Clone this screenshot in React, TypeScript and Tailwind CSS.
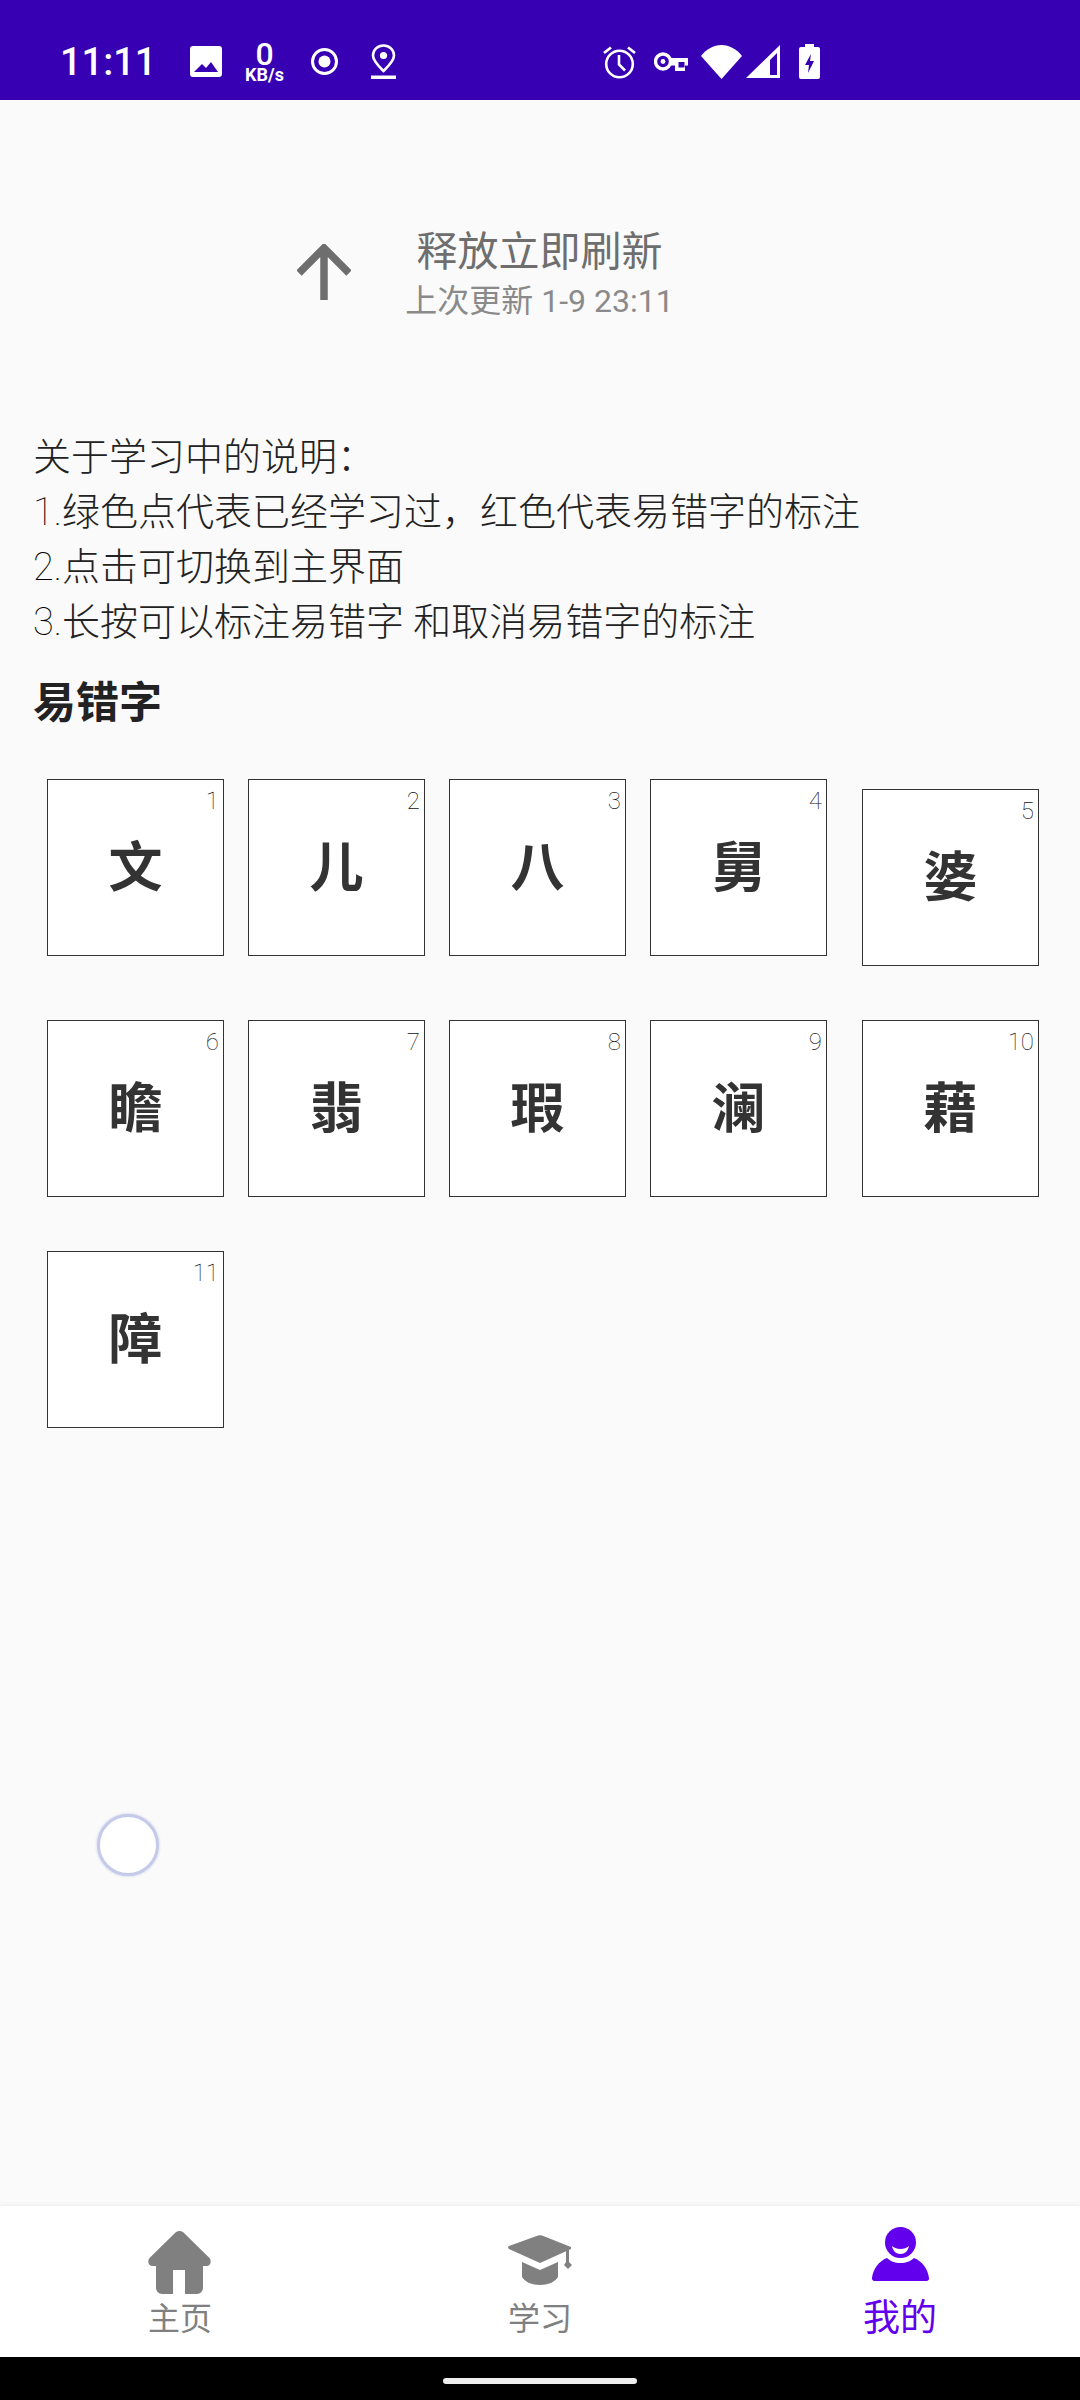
const FONT = 'font-["Roboto","Noto_Sans_CJK_SC",sans-serif]';

const ROWS = [
  [
    { n: 1, ch: '文' },
    { n: 2, ch: '儿' },
    { n: 3, ch: '八' },
    { n: 4, ch: '舅' },
    { n: 5, ch: '婆' },
  ],
  [
    { n: 6, ch: '瞻' },
    { n: 7, ch: '翡' },
    { n: 8, ch: '瑕' },
    { n: 9, ch: '澜' },
    { n: 10, ch: '藉' },
  ],
  [{ n: 11, ch: '障' }],
];

function StatusBar() {
  return (
    <div className="flex h-[100px] items-center bg-[#3700B3] pl-[60px] pt-[23px] text-white">
      <span className="w-[96px] whitespace-nowrap text-[38px] font-medium leading-none">11:11</span>
      {/* picture */}
      <svg className="ml-[34px]" width="32" height="31" viewBox="0 0 32 31">
        <path
          fillRule="evenodd"
          fill="#fff"
          d="M3 0h26a3 3 0 0 1 3 3v25a3 3 0 0 1-3 3H3a3 3 0 0 1-3-3V3a3 3 0 0 1 3-3zM4 26h24l-7-10-5 6-4-4z"
        />
      </svg>
      {/* net speed */}
      <div className="ml-[20px] flex w-[45px] flex-col items-center">
        <span className="text-[32px] font-medium leading-[26px]">0</span>
        <span className="text-[18px] font-bold leading-[15px]">KB/s</span>
      </div>
      <svg className="ml-[24px]" width="27" height="27" viewBox="0 0 27 27">
        <circle cx="13.5" cy="13.5" r="12" fill="none" stroke="#fff" strokeWidth="3" />
        <circle cx="13.5" cy="13.5" r="6" fill="#fff" />
      </svg>
      <svg className="ml-[33px]" width="25" height="35" viewBox="0 0 25 35">
        <path
          d="M12.5 27C8 22.5 2 17 2 11.5a10.5 10 0 0 1 21 0C23 17 17 22.5 12.5 27z"
          fill="none"
          stroke="#fff"
          strokeWidth="2.6"
        />
        <circle cx="12.5" cy="11.5" r="3.6" fill="#fff" />
        <rect x="0" y="31.5" width="25" height="3.5" fill="#fff" />
      </svg>
      {/* alarm */}
      <svg className="ml-[207px]" width="33" height="34" viewBox="0 0 33 34">
        <circle cx="16.5" cy="19" r="13.3" fill="none" stroke="#fff" strokeWidth="2.6" />
        <path d="M16 10v9.5l6 6" fill="none" stroke="#fff" strokeWidth="2.6" />
        <path d="M1 8l7-5.5M32 8l-7-5.5" fill="none" stroke="#fff" strokeWidth="2.8" />
      </svg>
      {/* key */}
      <svg className="ml-[18px]" width="34" height="19" viewBox="0 0 34 19">
        <circle cx="9" cy="9.5" r="7.5" fill="none" stroke="#fff" strokeWidth="3.4" />
        <circle cx="9" cy="9.5" r="2.4" fill="#fff" />
        <path d="M16 6h18v7.500h-3v5.500h-10v-5.500h-5z" fill="#fff" />
        <path d="M24.500 10h6v5.500h-6z" fill="#3700B3" />
      </svg>
      {/* wifi */}
      <svg className="ml-[13px]" width="41" height="34" viewBox="0 0 41 34">
        <path d="M0 11C5.5 4 12.5 0 20.5 0S35.500 4 41 11L20.500 34z" fill="#fff" />
      </svg>
      {/* signal */}
      <svg className="ml-[4px]" width="34" height="33" viewBox="0 0 34 33">
        <path fillRule="evenodd" fill="#fff" d="M34 0v33H0zM31 8l-7 7v15h7z" />
      </svg>
      {/* battery */}
      <svg className="ml-[19px]" width="21" height="35" viewBox="0 0 21 35">
        <path
          fillRule="evenodd"
          fill="#fff"
          d="M6 0h9v3h4a2 2 0 0 1 2 2v28a2 2 0 0 1-2 2H2a2 2 0 0 1-2-2V5a2 2 0 0 1 2-2h4zM12 10l-6 11h4l-1 8 6-12h-4z"
        />
      </svg>
    </div>
  );
}

function RefreshHeader() {
  return (
    <div className="flex h-[301px] items-center pl-[297px] pt-[48px]">
      <svg className="mt-[-6px]" width="54" height="56" viewBox="0 0 54 56">
        <path d="M27 56V4M2 29L27 4l25 25" fill="none" stroke="#6e6e6e" strokeWidth="7.500" />
      </svg>
      <div className="ml-[56px] flex w-[265px] flex-col items-center whitespace-nowrap">
        <span className="text-[41px] leading-[50px] text-[#6e6e6e]">释放立即刷新</span>
        <span className="mt-[2px] text-[32px] leading-[44px] text-[#8a8a8a]">上次更新 1-9 23:11</span>
      </div>
    </div>
  );
}

function CharBox({ n, ch, shifted }: { n: number; ch: string; shifted?: boolean }) {
  return (
    <div
      className={`relative flex h-[177px] w-[177px] shrink-0 items-center justify-center border-[1.5px] border-[#333] bg-white ${
        shifted ? 'mt-[10px]' : ''
      }`}
    >
      <span className="absolute right-[4px] top-[7px] text-[24px] font-thin leading-[28px] text-[#111]">{n}</span>
      <span className="mt-[2px] text-[54px] font-bold leading-none text-[#333]">{ch}</span>
    </div>
  );
}

function NavItem({
  label,
  active,
  children,
}: {
  label: string;
  active?: boolean;
  children: React.ReactNode;
}) {
  return (
    <div className="flex w-[360px] flex-col items-center">
      <div className="flex h-[68px] items-end justify-center">{children}</div>
      <span className={active ? 'mt-[3px] text-[37px] leading-[44px] text-[#6200EE]' : 'mt-[3px] text-[32px] leading-[44px] text-[#808080]'}>
        {label}
      </span>
    </div>
  );
}

export default function App() {
  return (
    <div className={`flex h-[2400px] w-[1080px] flex-col overflow-hidden bg-[#FAFAFA] ${FONT}`}>
      <StatusBar />
      <RefreshHeader />

      <div className="flex-1">
        {/* Notes */}
        <div className="mt-[29px] px-[33px] text-[38px] font-light leading-[55px] text-[#222]">
          <p>关于学习中的说明：</p>
          <p><span className="font-thin text-black">1.</span>绿色点代表已经学习过，红色代表易错字的标注</p>
          <p><span className="font-thin text-black">2.</span>点击可切换到主界面</p>
          <p><span className="font-thin text-black">3.</span>长按可以标注易错字 和取消易错字的标注</p>
        </div>
        <h2 className="mt-[28px] px-[33px] text-[43px] font-bold leading-[50px] text-[#222]">易错字</h2>

        {/* Char grid */}
        <div className="mt-[51px] flex flex-col gap-[54px] pl-[47px]">
          {ROWS.map((row, i) => (
            <div key={i} className="flex">
              {row.map((item, j) => (
                <div key={item.n} className={j === 4 ? 'ml-[35px]' : j > 0 ? 'ml-[24px]' : ''}>
                  <CharBox n={item.n} ch={item.ch} shifted={item.n === 5} />
                </div>
              ))}
            </div>
          ))}
        </div>
      </div>

      {/* Floating touch dot */}
      <div className="absolute left-[97px] top-[1814px] h-[62px] w-[62px] rounded-full border-[3px] border-[#c5cae9] bg-white shadow-[0_0_3px_#c5cae9]" />

      {/* Bottom nav */}
      <div className="flex h-[152px] border-t border-[#f0f0f0] bg-white pt-[20px] shadow-[0_-2px_3px_#f4f4f4]">
        <NavItem label="主页">
          <svg className="mr-[2px]" width="63" height="63" viewBox="0 0 63 63">
            <path
              fill="#808080"
              d="M27.500 1.500a6 6 0 0 1 8 0L61.500 27c2.500 3 1 8-3 8H55v22a6 6 0 0 1-6 6H37V39H25v24H14a6 6 0 0 1-6-6V35H4.500c-4 0-5.500-5-3-8z"
            />
          </svg>
        </NavItem>
        <NavItem label="学习">
          <svg className="mb-[9px]" width="64" height="50" viewBox="0 0 64 50">
            <path fill="#808080" d="M30 .6a5 5 0 0 1 4 0L63 12v2L32 28 1 14c-1.300-.7-1.300-2 0-3z" />
            <path fill="#808080" d="M14 27l18 8 18-8v15c-3 5-10 8-18 8s-15-3-18-8z" />
            <path fill="#808080" d="M58 15l3-1v13l3 3-4 4-4-4 2-3z" />
          </svg>
        </NavItem>
        <NavItem label="我的" active>
          <svg className="mb-[13px]" width="57" height="54" viewBox="0 0 57 54">
            <path
              fillRule="evenodd"
              fill="#6200EE"
              d="M28.500 0a15.500 15.500 0 1 1 0 31 15.500 15.500 0 0 1 0-31zM20 19c1 5 4 8 8.500 8s7.500-3 8.500-8c-2.500 2-5 3-8.500 3s-6-1-8.500-3z"
            />
            <path
              fill="#6200EE"
              d="M15 31c3 3 8 5 13.500 5S39 34 42 31c8 3 14 11 15 20a2.500 2.500 0 0 1-2.500 3h-52A2.500 2.500 0 0 1 0 51c1-9 7-17 15-20z"
            />
          </svg>
        </NavItem>
      </div>

      {/* Gesture bar */}
      <div className="flex h-[43px] items-start justify-center bg-black pt-[21px]">
        <div className="h-[6px] w-[194px] rounded-full bg-[#eeeeee]" />
      </div>
    </div>
  );
}
